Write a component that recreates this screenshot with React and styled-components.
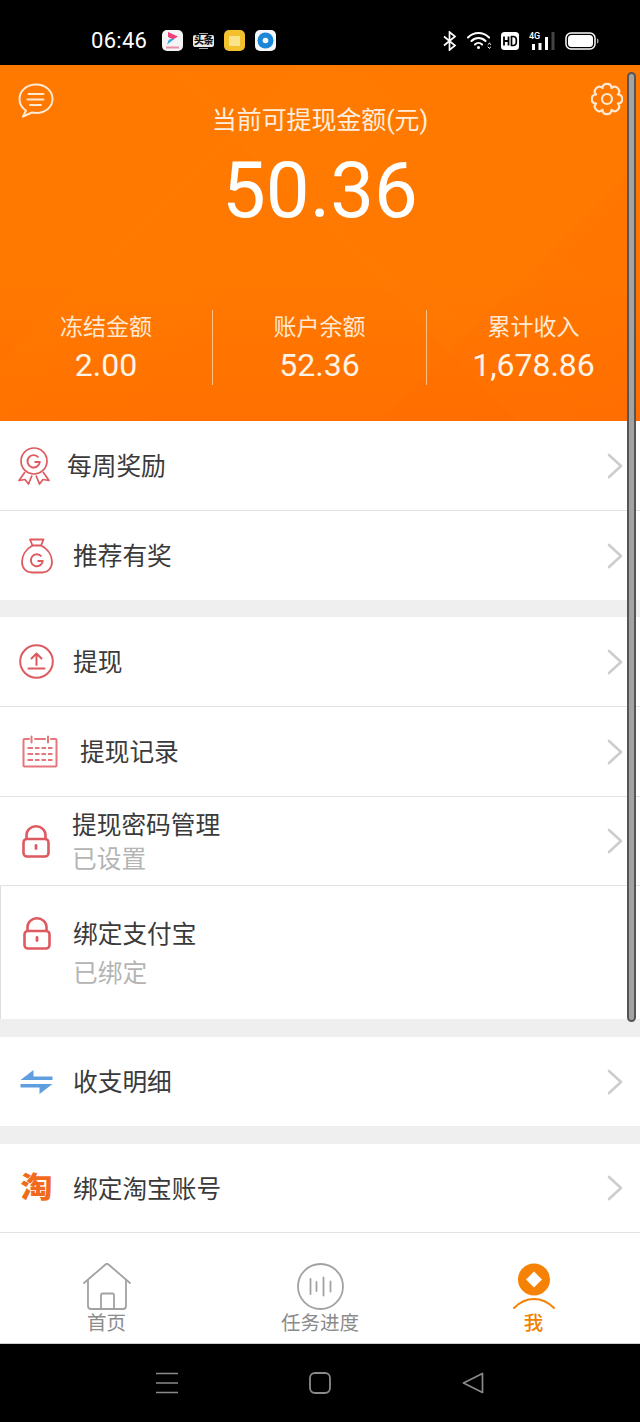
import styled, { createGlobalStyle } from "styled-components";

const GlobalStyle = createGlobalStyle`
    html, body {
        margin: 0;
        padding: 0;
        background: #000;
    }
    * {
        box-sizing: border-box;
    }
`

const Page = styled.div`
    position: relative;
    width: 640px;
    height: 1422px;
    overflow: hidden;
    display: flex;
    flex-direction: column;
    background: #fff;
    font-family: Roboto, "Noto Sans CJK SC", sans-serif;
`

const StatusBar = styled.div`
    height: 65px;
    flex: none;
    background: #000;
    display: flex;
    align-items: center;
    padding: 16px 41px 0 91px;
    color: #fff;
`
const Clock = styled.span`
    font-size: 22px;
    width: 71px;
    letter-spacing: 0.3px;
`
const AppIcons = styled.div`
    display: flex;
    gap: 10px;
`
const AppIcon = styled.div`
    width: 21px;
    height: 21px;
    border-radius: 5px;
    background: ${p => p.$bg};
    display: flex;
    flex-direction: column;
    align-items: center;
    justify-content: center;
    gap: 1px;
    overflow: hidden;
`
const NewsLabel = styled.span`
    font-size: 10px;
    font-weight: 900;
    line-height: 12px;
    width: 21px;
    text-align: center;
    border-radius: 2px;
    color: #111;
    background: #e9e9e9;
    white-space: nowrap;
    letter-spacing: -0.5px;
`
const NewsRule = styled.i`
    width: 9px;
    height: 1px;
    background: #aaa;
`
const StatusIcons = styled.div`
    margin-left: auto;
    display: flex;
    align-items: center;
    gap: 10px;
`

const Header = styled.header`
    position: relative;
    height: 356px;
    flex: none;
    color: #fff;
    background:
        linear-gradient(135deg, transparent 74%, rgba(255, 90, 0, 0.08) 74%, rgba(255, 90, 0, 0.16) 100%),
        linear-gradient(45deg, transparent 52%, rgba(255, 140, 20, 0.08) 52%, transparent 82%),
        linear-gradient(135deg, transparent 30%, rgba(255, 140, 0, 0.08) 30%, transparent 52%),
        linear-gradient(180deg, #ff7800 0%, #ff7800 60%, #ff7000 100%);
    display: flex;
    flex-direction: column;
    align-items: center;
`
const HeaderAction = styled.div`
    position: absolute;
    top: ${p => p.$top}px;
    ${p => p.$side}: ${p => p.$offset}px;
    display: flex;
`
const AmountLabel = styled.div`
    margin-top: 38px;
    font-size: 25px;
    line-height: 36px;
    color: #ffeedd;
    letter-spacing: -0.1px;
`
const Amount = styled.div`
    margin-top: 8px;
    font-size: 78px;
    line-height: 88px;
`
const Stats = styled.div`
    margin-top: 75px;
    align-self: stretch;
    display: grid;
    grid-template-columns: 213px 214px 213px;
`
const Stat = styled.div`
    height: 75px;
    padding-top: 1px;
    display: flex;
    flex-direction: column;
    align-items: center;
    border-right: ${p => (p.$divided ? "1px solid rgba(255, 225, 190, 0.7)" : "none")};
`
const StatLabel = styled.div`
    font-size: 23px;
    line-height: 34px;
    color: #ffe9d2;
`
const StatValue = styled.div`
    margin-top: 1px;
    font-size: 32px;
    line-height: 38px;
    color: #fff4e6;
`

const Row = styled.div`
    height: ${p => p.$height || 89}px;
    flex: none;
    display: flex;
    align-items: center;
    background: #fff;
    border-bottom: ${p => (p.$line ? "1px solid #e2e2e2" : "none")};
    border-left: ${p => (p.$framed ? "1px solid #dedede" : "none")};
`
const IconSlot = styled.div`
    width: ${p => p.$textX}px;
    flex: none;
    display: flex;
    justify-content: center;
    padding-right: ${p => p.$textX - 2 * p.$iconX}px;
    margin-top: ${p => p.$lift || 0}px;
`
const RowText = styled.div`
    flex: 1;
    padding-top: 3px;
    display: flex;
    flex-direction: column;
    gap: ${p => p.$gap || 0}px;
`
const RowTitle = styled.div`
    font-size: 24.7px;
    line-height: 34px;
    color: #3a3a3a;
`
const RowSub = styled.div`
    font-size: 24.7px;
    line-height: 34px;
    color: #b4b4b4;
`
const Chevron = styled.svg`
    flex: none;
    width: 16px;
    height: 26px;
    margin-right: 17px;
`
const Gap = styled.div`
    height: ${p => p.$h}px;
    flex: none;
    background: #efefef;
`
const TaobaoMark = styled.span`
    font-size: 29px;
    font-weight: 900;
    line-height: 36px;
    color: #f26a1b;
    transform: scaleX(1.1);
`

const TabBar = styled.nav`
    height: 111px;
    flex: none;
    display: grid;
    grid-template-columns: 213px 214px 213px;
    background: #fff;
    border-bottom: 1px solid #cfcfcf;
`
const Tab = styled.div`
    display: flex;
    flex-direction: column;
    align-items: center;
    padding-top: 30px;
    color: ${p => (p.$active ? "#f08300" : "#8b8b8b")};
`
const TabLabel = styled.span`
    font-size: 19.5px;
    line-height: 24px;
    margin-top: 2px;
    font-weight: ${p => (p.$active ? 500 : 400)};
`

const NavBar = styled.div`
    flex: 1;
    background: #000;
    display: grid;
    grid-template-columns: 153px 153px 153px;
    justify-content: center;
    align-items: center;
    justify-items: center;
    padding-bottom: 1px;
`

const ScrollThumb = styled.div`
    position: absolute;
    left: 627px;
    top: 72px;
    width: 9px;
    height: 950px;
    border-radius: 5px;
    background: #a3a3a3;
    border: 2px solid #555;
`

const RED = "#de5a60"

// rounded cog outline, 8 lobes
function cogPath(cx, cy, inner, outer, lobes) {
    const pt = (r, a) => `${(cx + r * Math.cos(a)).toFixed(2)} ${(cy + r * Math.sin(a)).toFixed(2)}`
    const step = (Math.PI * 2) / lobes
    let d = `M${pt(inner, -step / 2)}`
    for (let i = 0; i < lobes; i++) {
        const a = i * step
        d += `C${pt(outer, a - step * 0.32)} ${pt(outer, a + step * 0.32)} ${pt(inner, a + step / 2)}`
    }
    return d + "Z"
}

function ChevronIcon() {
    return (
        <Chevron viewBox="0 0 16 26" fill="none" stroke="#cdcdcd" strokeWidth="2.6" strokeLinecap="round" strokeLinejoin="round">
            <path d="M2 2l12 11L2 24" />
        </Chevron>
    )
}

function MedalIcon() {
    return (
        <svg width="32" height="38" viewBox="0 0 32 38" fill="none" stroke={RED} strokeWidth="1.7" strokeLinejoin="round">
            <circle cx="16" cy="14" r="13" />
            <path d="M20.500 10.500A6.200 6.200 0 1 0 21.800 15H16.500" strokeWidth="1.900" />
            <path d="M7 25L1 33.500l6-1 3.500 4.500 3.500-8.500M25 25l6 8.500-6-1-3.500 4.500-3.500-8.500" />
        </svg>
    )
}

function BagIcon() {
    return (
        <svg width="32" height="36" viewBox="0 0 32 36" fill="none" stroke={RED} strokeWidth="1.800" strokeLinejoin="round">
            <path d="M9 1.500h13.500l-2.500 6h-8.500z" />
            <path d="M11.500 7.500C4 11.500 1 18.500 1 24c0 6 4 10.500 10 10.500h10c6 0 10-4.500 10-10.500 0-5.500-3-12.500-11-16.500" />
            <path d="M20.500 18.500A6 6 0 1 0 21.800 23H16.500" strokeWidth="1.900" />
        </svg>
    )
}

function UploadIcon() {
    return (
        <svg width="35" height="35" viewBox="0 0 35 35" fill="none" stroke={RED} strokeWidth="2" strokeLinecap="round" strokeLinejoin="round">
            <circle cx="17.500" cy="17.500" r="16.300" />
            <path d="M17.500 21V10M12.500 14.500l5-5 5 5M9.500 24.500h16" />
        </svg>
    )
}

function CalendarIcon() {
    return (
        <svg width="36" height="33" viewBox="0 0 36 33" fill="none" stroke="#e5767b" strokeWidth="2" strokeLinecap="round" strokeLinejoin="round">
            <path d="M7 4H2.500a1 1 0 0 0-1 1v25.500a1 1 0 0 0 1 1h31a1 1 0 0 0 1-1V5a1 1 0 0 0-1-1H29M13 4h10" />
            <path d="M9.500 1.500v6M26 1.500v6" />
            <path d="M5.500 13h5.500M13 13h4.500M19.500 13h4.500M26 13h4.500M5.500 19h5.500M13 19h4.500M19.500 19h4.500M26 19h4.500M5.500 25h5.500M13 25h4.500M19.500 25h4.500M26 25h4.500" strokeWidth="2.200" strokeLinecap="butt" />
        </svg>
    )
}

function LockIcon() {
    return (
        <svg width="28" height="33" viewBox="0 0 28 33" fill="none" stroke={RED} strokeWidth="2.600" strokeLinejoin="round">
            <path d="M4.500 14v-4a9.500 8.700 0 0 1 19 0v4" />
            <rect x="1.500" y="14" width="25" height="17.500" rx="3.500" />
            <rect x="12.600" y="19" width="2.800" height="6" rx="1.400" fill={RED} stroke="none" />
        </svg>
    )
}

function SwapIcon() {
    return (
        <svg width="33" height="24" viewBox="0 0 33 24" fill="#5f9fe0">
            <path d="M0.500 10L13.500 0V6.500H32.500V10z" />
            <path d="M32.500 14L19.500 24V17.500H0.500V14z" />
        </svg>
    )
}

const rowsTop = [
    { title: "每周奖励", icon: <MedalIcon />, textX: 67, iconX: 34, line: true, height: 90 },
    { title: "推荐有奖", icon: <BagIcon />, textX: 73, iconX: 37 },
]
const rowsMiddle = [
    { title: "提现", icon: <UploadIcon />, textX: 73, iconX: 37, line: true, height: 90 },
    { title: "提现记录", icon: <CalendarIcon />, textX: 80, iconX: 41, line: true, height: 90 },
    { title: "提现密码管理", sub: "已设置", icon: <LockIcon />, textX: 72, iconX: 37, line: true, height: 89 },
]

function MenuRow({ title, sub, icon, textX, iconX, line, height }) {
    return (
        <Row $line={line} $height={height}>
            <IconSlot $textX={textX} $iconX={iconX}>{icon}</IconSlot>
            <RowText>
                <RowTitle>{title}</RowTitle>
                {sub && <RowSub>{sub}</RowSub>}
            </RowText>
            <ChevronIcon />
        </Row>
    )
}

export default function App() {
    return (
        <Page>
            <GlobalStyle />
            <StatusBar>
                <Clock>06:46</Clock>
                <AppIcons>
                    <AppIcon $bg="#f4f4f4">
                        <svg width="17" height="19" viewBox="0 0 17 19">
                            <path d="M4 1l10 4.500-5 3L4 6z" fill="#f0407a" />
                            <path d="M11 7.500l-8 6 2-5z" fill="#2aa6e8" />
                            <rect x="2" y="15.500" width="13" height="2" fill="#ec8fa6" />
                        </svg>
                    </AppIcon>
                    <AppIcon $bg="#000">
                        <NewsRule />
                        <NewsLabel>头条</NewsLabel>
                        <NewsRule />
                    </AppIcon>
                    <AppIcon $bg="#f3c12d">
                        <svg width="11" height="10" viewBox="0 0 11 10"><rect width="11" height="10" rx="1" fill="#fbe38a" /></svg>
                    </AppIcon>
                    <AppIcon $bg="#f5f7fa">
                        <svg width="17" height="17" viewBox="0 0 17 17">
                            <circle cx="8.500" cy="8.500" r="8" fill="#1c86d8" />
                            <circle cx="8.500" cy="8.500" r="2.800" fill="#f5f7fa" />
                        </svg>
                    </AppIcon>
                </AppIcons>
                <StatusIcons>
                    <svg width="14" height="20" viewBox="0 0 14 20" fill="none" stroke="#fff" strokeWidth="1.700">
                        <path d="M1 5.500l11 9-5.500 4.500V1L12 5.500l-11 9" />
                    </svg>
                    <svg width="24" height="19" viewBox="0 0 24 19" fill="none" stroke="#fff" strokeWidth="2" strokeLinecap="round">
                        <path d="M1 6.500c6-6 15-6 21 0M4.500 10c4-4 10-4 14 0M8 13.500c2-2 5-2 7 0" />
                        <circle cx="11.500" cy="16.500" r="1.500" fill="#fff" stroke="none" />
                        <path d="M21 13.500l1.500-1.500 1 1.500M21 16l1.500 1.500 1-1.500" strokeWidth="1" />
                    </svg>
                    <svg width="18" height="18" viewBox="0 0 18 18">
                        <rect width="18" height="18" rx="3.500" fill="#fff" />
                        <path d="M3 4.500v9M7.500 4.500v9M3 9h4.500" stroke="#000" strokeWidth="1.800" fill="none" />
                        <path d="M10.500 4.500v9h1.800a3 3 0 0 0 3-3V7.500a3 3 0 0 0-3-3z" stroke="#000" strokeWidth="1.700" fill="none" />
                    </svg>
                    <svg width="26" height="19" viewBox="0 0 26 19">
                        <text x="0" y="8" fontSize="9" fill="#fff" fontFamily="Roboto, sans-serif" fontWeight="500">4G</text>
                        <rect x="3" y="13" width="3" height="6" fill="#fff" />
                        <rect x="9.500" y="12" width="3" height="7" fill="#fff" />
                        <rect x="16" y="6" width="3" height="13" fill="#fff" />
                        <rect x="22.500" y="1" width="3" height="18" fill="#444" />
                    </svg>
                    <svg width="34" height="18" viewBox="0 0 34 18">
                        <rect x="1" y="1" width="29" height="16" rx="5" fill="none" stroke="#fff" strokeWidth="1.500" />
                        <rect x="3" y="3" width="25" height="12" rx="3.500" fill="#fff" />
                        <path d="M32 6.500c1 .3 1.500 1 1.500 2.500s-.5 2.200-1.500 2.500z" fill="#aaa" />
                    </svg>
                </StatusIcons>
            </StatusBar>

            <Header>
                <HeaderAction $side="left" $offset={18} $top={18}>
                    <svg width="36" height="36" viewBox="0 0 36 36" fill="none" stroke="#ffe9d2" strokeWidth="2" strokeLinecap="round" strokeLinejoin="round">
                        <path d="M18 1.500C8.500 1.500 1.500 8 1.500 16c0 5 2.500 9 6.500 11.500L5 33.500l9-4c1.300.3 2.600.4 4 .4 9.500 0 16.500-6 16.500-14S27.500 1.500 18 1.500z" />
                        <path d="M10.500 11h15M9.500 16.500h16M12 22h11" />
                    </svg>
                </HeaderAction>
                <HeaderAction $side="right" $offset={17} $top={17}>
                    <svg width="32" height="34" viewBox="0 0 32 34" fill="none" stroke="#ffe9d2" strokeWidth="2.200" strokeLinejoin="round">
                        <path d={cogPath(16, 17, 11.8, 17.2, 8)} />
                        <circle cx="16" cy="17" r="5" />
                    </svg>
                </HeaderAction>
                <AmountLabel>当前可提现金额(元)</AmountLabel>
                <Amount>50.36</Amount>
                <Stats>
                    <Stat $divided>
                        <StatLabel>冻结金额</StatLabel>
                        <StatValue>2.00</StatValue>
                    </Stat>
                    <Stat $divided>
                        <StatLabel>账户余额</StatLabel>
                        <StatValue>52.36</StatValue>
                    </Stat>
                    <Stat>
                        <StatLabel>累计收入</StatLabel>
                        <StatValue>1,678.86</StatValue>
                    </Stat>
                </Stats>
            </Header>

            {rowsTop.map(row => <MenuRow key={row.title} {...row} />)}
            <Gap $h={17} />
            {rowsMiddle.map(row => <MenuRow key={row.title} {...row} />)}
            <Row $framed $height={133}>
                <IconSlot $textX={72} $iconX={36} $lift={-39}><LockIcon /></IconSlot>
                <RowText $gap={5}>
                    <RowTitle>绑定支付宝</RowTitle>
                    <RowSub>已绑定</RowSub>
                </RowText>
            </Row>
            <Gap $h={18} />
            <MenuRow title="收支明细" icon={<SwapIcon />} textX={73} iconX={37} />
            <Gap $h={18} />
            <MenuRow title="绑定淘宝账号" icon={<TaobaoMark>淘</TaobaoMark>} textX={73} iconX={37} line />

            <TabBar>
                <Tab>
                    <svg width="48" height="47" viewBox="0 0 48 47" fill="none" stroke="#a2a2a2" strokeWidth="1.800" strokeLinecap="round" strokeLinejoin="round">
                        <path d="M1 20L22.500 1.500a2.300 2.300 0 0 1 3 0L47 20" />
                        <path d="M5 17v26a3 3 0 0 0 3 3h32a3 3 0 0 0 3-3V17" />
                        <path d="M18 46V32a1.500 1.500 0 0 1 1.500-1.500h10A1.500 1.500 0 0 1 31 32v14" />
                    </svg>
                    <TabLabel>首页</TabLabel>
                </Tab>
                <Tab>
                    <svg width="47" height="47" viewBox="0 0 47 47" fill="none" stroke="#a2a2a2" strokeWidth="1.800" strokeLinecap="round">
                        <circle cx="23.500" cy="23.500" r="22.500" />
                        <path d="M13.500 16v15M19.500 19v9M26.500 14.500v18M33.500 18.500v10" />
                    </svg>
                    <TabLabel>任务进度</TabLabel>
                </Tab>
                <Tab $active>
                    <svg width="44" height="47" viewBox="0 0 44 47">
                        <circle cx="22" cy="16.500" r="16" fill="#f58205" />
                        <path d="M22 8.500l8 8-8 8-8-8z" fill="#fff" />
                        <path d="M2 45C8 39 15 36 22 36s14 3 20 9" fill="none" stroke="#f58205" strokeWidth="2" strokeLinecap="round" />
                    </svg>
                    <TabLabel $active>我</TabLabel>
                </Tab>
            </TabBar>

            <NavBar>
                <svg width="24" height="24" viewBox="0 0 24 24" stroke="#8a8a8a" strokeWidth="1.600">
                    <path d="M1 2.500h22M1 12h22M1 21.500h22" />
                </svg>
                <svg width="22" height="22" viewBox="0 0 22 22" fill="none" stroke="#8a8a8a" strokeWidth="1.800">
                    <rect x="1" y="1" width="20" height="20" rx="5" />
                </svg>
                <svg width="22" height="22" viewBox="0 0 22 22" fill="none" stroke="#8a8a8a" strokeWidth="1.700" strokeLinejoin="round">
                    <path d="M20.500 1.500v19L1.500 11z" />
                </svg>
            </NavBar>

            <ScrollThumb />
        </Page>
    )
}
